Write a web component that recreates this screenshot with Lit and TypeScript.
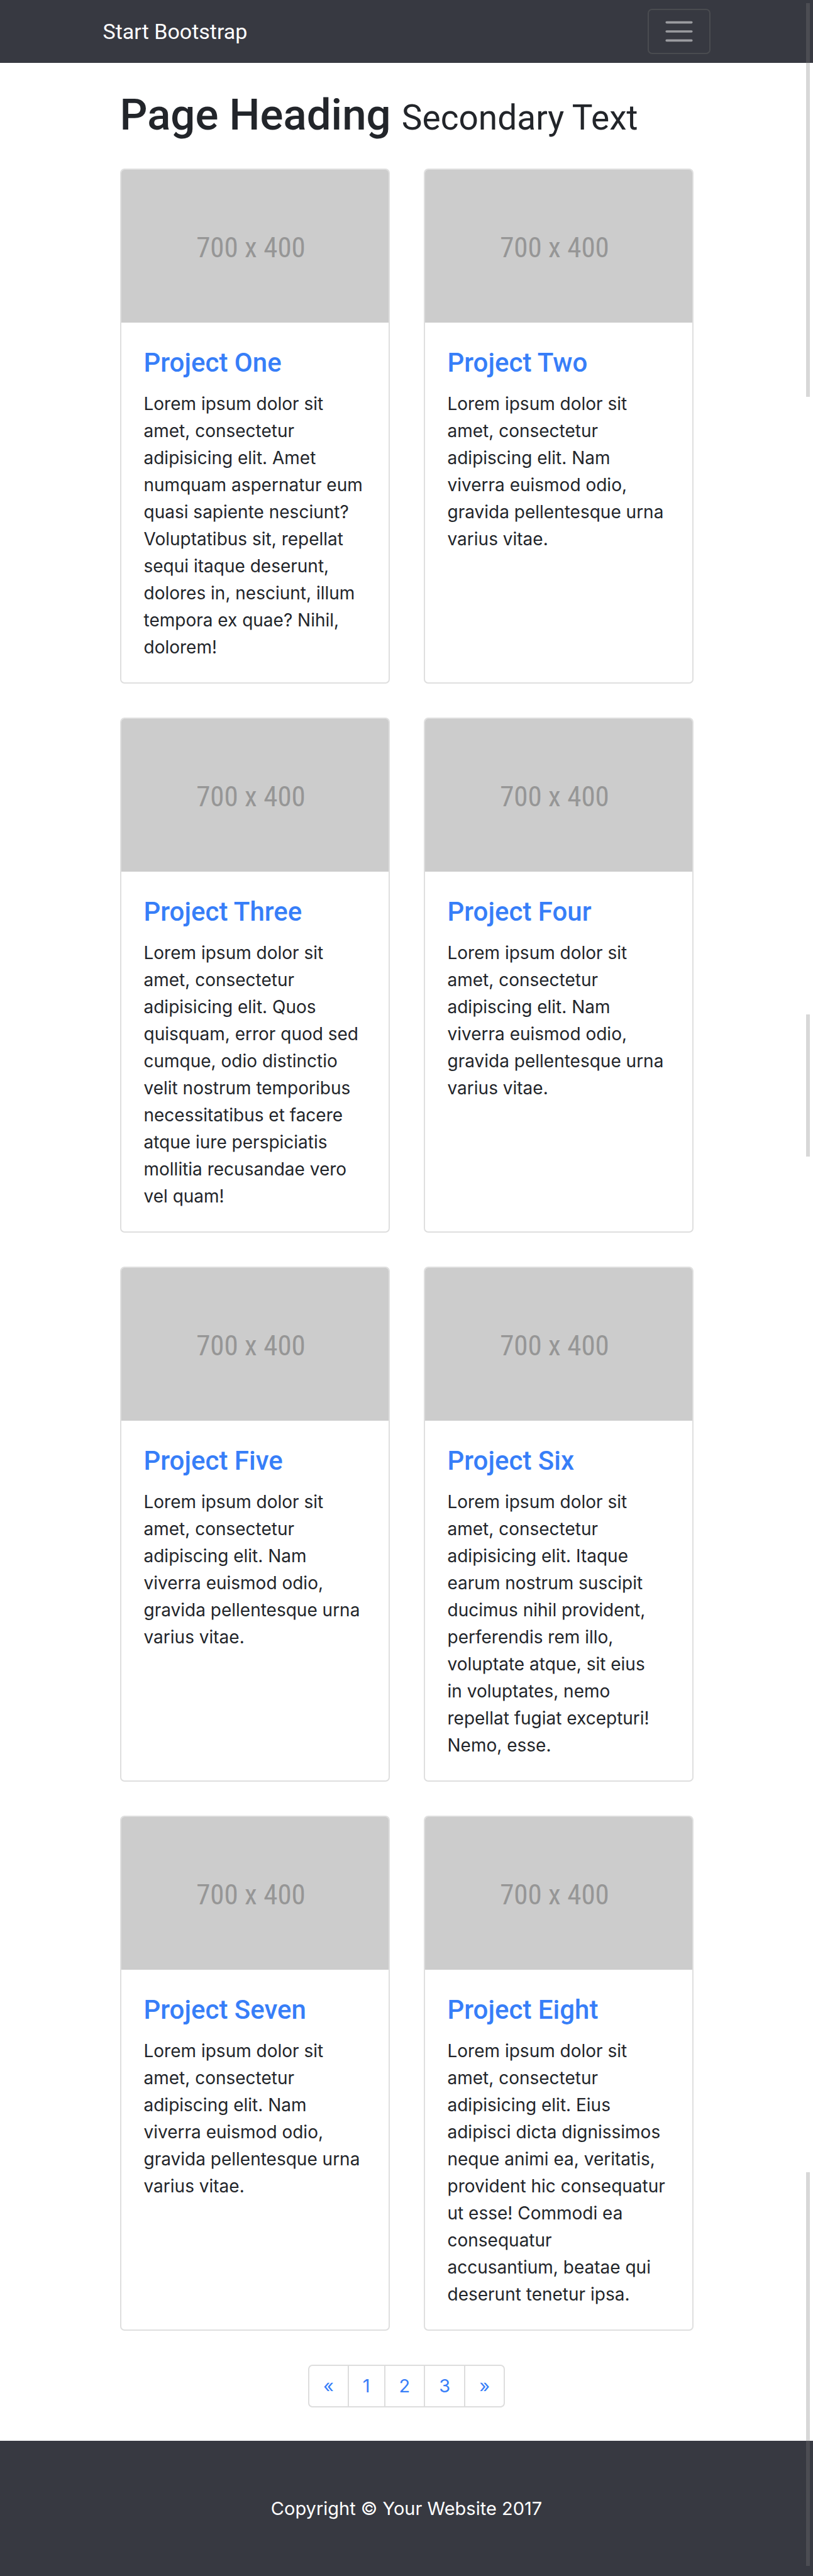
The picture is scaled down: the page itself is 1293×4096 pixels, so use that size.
import { LitElement, html, css } from "lit";
import { customElement, property } from "lit/decorators.js";

interface Project {
  title: string;
  text: string;
}

const SHORT_TEXT = `Lorem ipsum dolor sit
amet, consectetur
adipiscing elit. Nam
viverra euismod odio,
gravida pellentesque urna
varius vitae.`;

const PROJECTS: Project[] = [
  {
    title: "Project One",
    text: `Lorem ipsum dolor sit
amet, consectetur
adipisicing elit. Amet
numquam aspernatur eum
quasi sapiente nesciunt?
Voluptatibus sit, repellat
sequi itaque deserunt,
dolores in, nesciunt, illum
tempora ex quae? Nihil,
dolorem!`,
  },
  { title: "Project Two", text: SHORT_TEXT },
  {
    title: "Project Three",
    text: `Lorem ipsum dolor sit
amet, consectetur
adipisicing elit. Quos
quisquam, error quod sed
cumque, odio distinctio
velit nostrum temporibus
necessitatibus et facere
atque iure perspiciatis
mollitia recusandae vero
vel quam!`,
  },
  { title: "Project Four", text: SHORT_TEXT },
  { title: "Project Five", text: SHORT_TEXT },
  {
    title: "Project Six",
    text: `Lorem ipsum dolor sit
amet, consectetur
adipisicing elit. Itaque
earum nostrum suscipit
ducimus nihil provident,
perferendis rem illo,
voluptate atque, sit eius
in voluptates, nemo
repellat fugiat excepturi!
Nemo, esse.`,
  },
  { title: "Project Seven", text: SHORT_TEXT },
  {
    title: "Project Eight",
    text: `Lorem ipsum dolor sit
amet, consectetur
adipisicing elit. Eius
adipisci dicta dignissimos
neque animi ea, veritatis,
provident hic consequatur
ut esse! Commodi ea
consequatur
accusantium, beatae qui
deserunt tenetur ipsa.`,
  },
];

@customElement("project-card")
export class ProjectCard extends LitElement {
  @property() heading = "";
  @property() text = "";

  static styles = css`
    :host {
      display: flex;
      flex-direction: column;
      box-sizing: border-box;
      border: 2px solid #dfdfdf;
      border-radius: 7px;
      overflow: hidden;
      background: #fff;
    }
    .thumb {
      display: flex;
      align-items: center;
      justify-content: center;
      box-sizing: border-box;
      height: 243px;
      padding: 4px 12px 0 0;
      background: #ccc;
      color: #969696;
      font: 45px/54px "Liberation Sans Narrow", "Roboto Condensed", "Liberation Sans", sans-serif;
      text-decoration: none;
    }
    .body {
      flex: 1;
      padding: 38px 36px 34px;
    }
    .title {
      margin: 0 0 19px;
      font-family: Roboto, Inter, sans-serif;
      font-size: 42px;
      line-height: 51px;
      font-weight: 500;
    }
    .link {
      color: #377ef8;
      text-decoration: none;
    }
    .text {
      margin: 0;
      line-height: 43px;
      white-space: pre-line;
    }
  `;

  render() {
    return html`
      <a class="thumb" href="#">700 x 400</a>
      <div class="body">
        <h4 class="title"><a class="link" href="#">${this.heading}</a></h4>
        <p class="text">${this.text}</p>
      </div>
    `;
  }
}

@customElement("app-root")
export class AppRoot extends LitElement {
  static styles = css`
    :host {
      display: block;
      position: relative;
      background: #fff;
      color: #22252a;
      font-family: Inter, "Liberation Sans", sans-serif;
      font-size: 28px;
      line-height: 43px;
    }
    .container {
      box-sizing: border-box;
      width: 100%;
      max-width: 966px;
      margin: 0 auto;
    }
    .padded {
      padding: 0 27px;
    }
    .nav {
      padding: 14px 0;
      background: #373941;
    }
    .bar {
      display: flex;
      align-items: center;
      justify-content: space-between;
    }
    .brand {
      color: #fff;
      font-family: Roboto, Inter, sans-serif;
      font-size: 34px;
      text-decoration: none;
    }
    .toggle {
      display: flex;
      padding: 7px 21px;
      border: 2px solid #4a4c50;
      border-radius: 7px;
      background: none;
      color: #9b9ca0;
      cursor: pointer;
    }
    .icon {
      display: block;
      width: 54px;
      height: 54px;
    }
    .heading {
      margin: 40px 0 42px;
      font-family: Roboto, Inter, sans-serif;
      font-size: 69px;
      line-height: 86px;
      font-weight: 500;
    }
    .secondary {
      font-size: 55px;
      line-height: 1;
      font-weight: 400;
    }
    .grid {
      display: grid;
      grid-template-columns: 1fr 1fr;
      gap: 54px;
    }
    .pages {
      display: flex;
      justify-content: center;
      margin: 54px 0 53px;
      padding: 0;
      list-style: none;
    }
    .page {
      display: block;
      padding: 14px 22px;
      border: 2px solid #ddd;
      margin-left: -2px;
      font-size: 29px;
      line-height: 36px;
      color: #377ef8;
      text-decoration: none;
    }
    .item:first-child .page {
      margin-left: 0;
      border-radius: 7px 0 0 7px;
    }
    .item:last-child .page {
      border-radius: 0 7px 7px 0;
    }
    .footer {
      padding: 86px 0;
      background: #373941;
      color: #fff;
      font-size: 29px;
      text-align: center;
    }
    .copyright {
      margin: 0;
    }
    .thumbbar {
      position: absolute;
      right: 5px;
      width: 6px;
      background: rgba(127, 127, 127, 0.3);
      pointer-events: none;
    }
    .first {
      top: 5px;
      height: 626px;
    }
    .second {
      top: 1613px;
      height: 226px;
    }
    .third {
      bottom: 16px;
      height: 626px;
    }
  `;

  render() {
    return html`
      <nav class="nav">
        <div class="container bar">
          <a class="brand" href="#">Start Bootstrap</a>
          <button class="toggle" type="button" aria-label="Toggle navigation" aria-expanded="false">
            <svg class="icon" viewBox="0 0 30 30" aria-hidden="true">
              <path
                d="M4 7h22M4 15h22M4 23h22"
                fill="none"
                stroke="currentColor"
                stroke-width="2"
                stroke-linecap="round"
              />
            </svg>
          </button>
        </div>
      </nav>
      <main class="container padded">
        <h1 class="heading">Page Heading <small class="secondary">Secondary Text</small></h1>
        <div class="grid">
          ${PROJECTS.map((p) => html`<project-card .heading=${p.title} .text=${p.text}></project-card>`)}
        </div>
        <ul class="pages">
          <li class="item"><a class="page" href="#" aria-label="Previous">«</a></li>
          ${[1, 2, 3].map((n) => html`<li class="item"><a class="page" href="#">${n}</a></li>`)}
          <li class="item"><a class="page" href="#" aria-label="Next">»</a></li>
        </ul>
      </main>
      <footer class="footer">
        <p class="copyright">Copyright © Your Website 2017</p>
      </footer>
      <div class="thumbbar first"></div>
      <div class="thumbbar second"></div>
      <div class="thumbbar third"></div>
    `;
  }
}
